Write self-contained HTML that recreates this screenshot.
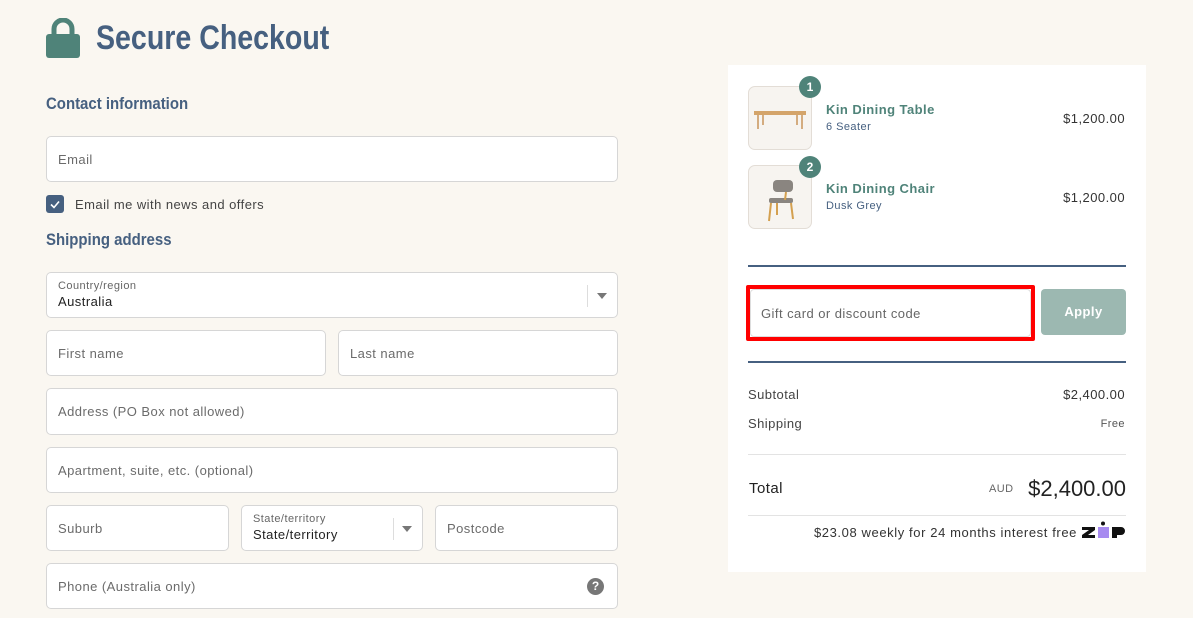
<!DOCTYPE html>
<html><head><style>
*{box-sizing:border-box;margin:0;padding:0}
body{width:1193px;height:618px;background:#faf7f1;font-family:"Liberation Sans",sans-serif;position:relative;overflow:hidden;color:#333;letter-spacing:0.45px}
.a{position:absolute}
.f{position:absolute;background:#fff;border:1px solid #d6d6d6;border-radius:5px;font-size:13px;color:#6b6b6b;padding-left:11px;display:flex;align-items:center}
h2{position:absolute;font-weight:bold;color:#466080;font-size:17px;letter-spacing:0;transform:scaleX(0.88);transform-origin:left}
.lbl{font-size:11px;color:#666}
.thumb{position:absolute;left:748px;width:64px;height:64px;border:1px solid #e3ddd6;border-radius:7px;background:#f7f4f0}
.badge{position:absolute;width:22px;height:22px;border-radius:50%;background:#4f8379;color:#fff;font-size:12px;font-weight:bold;text-align:center;line-height:22px;letter-spacing:0}
.nm{position:absolute;left:826px;font-size:13px;font-weight:bold;color:#4f8379}
.sb{position:absolute;left:826px;font-size:11px;color:#466080}
.pr{position:absolute;right:68px;font-size:13px;color:#333}
</style></head><body>
<svg class="a" style="left:46px;top:18px" width="34" height="40" viewBox="0 0 34 40"><path d="M8 17V11a9 9 0 0 1 18 0v6" fill="none" stroke="#4f8379" stroke-width="5"/><rect x="0" y="16" width="34" height="24" rx="3" fill="#4f8379"/></svg>
<div class="a" style="left:96px;top:19px;font-weight:bold;font-size:34px;color:#466080;letter-spacing:0;transform:scaleX(0.84);transform-origin:left">Secure Checkout</div>
<h2 style="left:46px;top:94px">Contact information</h2>
<div class="f" style="left:46px;top:136px;width:572px;height:46px">Email</div>
<div class="a" style="left:46px;top:195px;width:18px;height:18px;background:#466080;border-radius:3px"><svg width="18" height="18"><path d="M5 9.5l3 3 5-6" fill="none" stroke="#fff" stroke-width="1.6"/></svg></div>
<div class="a" style="left:75px;top:197px;font-size:13px;color:#444">Email me with news and offers</div>
<h2 style="left:46px;top:230px">Shipping address</h2>
<div class="f" style="left:46px;top:272px;width:572px;height:46px;display:block;padding-top:7px"><div class="lbl">Country/region</div><div style="color:#222;font-size:13px;margin-top:2px">Australia</div>
<div class="a" style="left:540px;top:12px;width:1px;height:22px;background:#ddd"></div><div class="a" style="left:550px;top:20px;border:5px solid transparent;border-top:6px solid #777;border-bottom:0"></div></div>
<div class="f" style="left:46px;top:330px;width:280px;height:46px">First name</div>
<div class="f" style="left:338px;top:330px;width:280px;height:46px">Last name</div>
<div class="f" style="left:46px;top:388px;width:572px;height:47px">Address (PO Box not allowed)</div>
<div class="f" style="left:46px;top:447px;width:572px;height:46px">Apartment, suite, etc. (optional)</div>
<div class="f" style="left:46px;top:505px;width:183px;height:46px">Suburb</div>
<div class="f" style="left:241px;top:505px;width:182px;height:46px;display:block;padding-top:7px"><div class="lbl">State/territory</div><div style="color:#222;margin-top:2px">State/territory</div>
<div class="a" style="left:151px;top:12px;width:1px;height:22px;background:#ddd"></div><div class="a" style="left:160px;top:20px;border:5px solid transparent;border-top:6px solid #777;border-bottom:0"></div></div>
<div class="f" style="left:435px;top:505px;width:183px;height:46px">Postcode</div>
<div class="f" style="left:46px;top:563px;width:572px;height:46px">Phone (Australia only)<div class="a" style="left:540px;top:14px;width:17px;height:17px;border-radius:50%;background:#777;color:#fff;font-size:12px;font-weight:bold;text-align:center;line-height:17px;letter-spacing:0">?</div></div>

<div class="a" style="left:728px;top:65px;width:418px;height:507px;background:#fff"></div>
<div class="thumb" style="top:86px"><svg width="62" height="62"><rect x="5" y="24" width="52" height="4" fill="#d4a46a"/><path d="M9 28v14M53 28v14M14 28v10M48 28v10" stroke="#c8945a" stroke-width="1.5"/></svg></div>
<div class="badge" style="left:799px;top:76px">1</div>
<div class="nm" style="top:102px">Kin Dining Table</div><div class="sb" style="top:121px">6 Seater</div><div class="pr" style="top:111px">$1,200.00</div>
<div class="thumb" style="top:165px"><svg width="62" height="62"><rect x="24" y="14" width="20" height="12" rx="4" fill="#8a8580"/><rect x="20" y="32" width="24" height="5" rx="2" fill="#8a8580"/><path d="M22 37l-2 18M42 37l2 16M28 37v12M37 26l-1 8" stroke="#d4a050" stroke-width="2"/></svg></div>
<div class="badge" style="left:799px;top:156px">2</div>
<div class="nm" style="top:181px">Kin Dining Chair</div><div class="sb" style="top:200px">Dusk Grey</div><div class="pr" style="top:190px">$1,200.00</div>
<div class="a" style="left:748px;top:265px;width:378px;height:2px;background:#466080"></div>
<div class="a" style="left:746px;top:285px;width:289px;height:56px;border:4px solid #f00;border-radius:2px;background:#fff"></div>
<div class="a" style="left:750px;top:289px;width:281px;height:48px;border:1px solid #ddd;border-radius:4px;font-size:13px;color:#666;padding:16px 0 0 10px">Gift card or discount code</div>
<div class="a" style="left:1041px;top:289px;width:85px;height:46px;background:#9cb8b1;border-radius:4px;color:#fff;font-size:13px;font-weight:bold;text-align:center;line-height:46px">Apply</div>
<div class="a" style="left:748px;top:361px;width:378px;height:2px;background:#466080"></div>
<div class="a" style="left:748px;top:387px;font-size:13px;color:#444">Subtotal</div><div class="pr" style="top:387px">$2,400.00</div>
<div class="a" style="left:748px;top:416px;font-size:13px;color:#444">Shipping</div><div class="pr" style="top:418px;font-size:11px;color:#555">Free</div>
<div class="a" style="left:748px;top:454px;width:378px;height:1px;background:#e3e3e3"></div>
<div class="a" style="left:749px;top:480px;font-size:15px;color:#222">Total</div>
<div class="a" style="left:989px;top:483px;font-size:11px;color:#666">AUD</div>
<div class="a" style="right:67px;top:476px;font-size:22px;color:#222;letter-spacing:0">$2,400.00</div>
<div class="a" style="left:748px;top:515px;width:378px;height:1px;background:#e3e3e3"></div>
<div class="a" style="right:116px;top:525px;font-size:13px;color:#333;letter-spacing:0.6px">$23.08 weekly for 24 months interest free</div>
<svg class="a" style="left:1081px;top:521px" width="46" height="18" viewBox="0 0 46 18"><path d="M1 6h13v3l-7 5h7v3H1v-3l7-5H1z" fill="#111"/><rect x="17" y="6" width="11" height="11" fill="#a78bf0"/><circle cx="22" cy="2.5" r="2" fill="#111"/><path d="M31 6h9a4 4 0 0 1 0 8h-4v3h-5z" fill="#111"/></svg>
</body></html>
